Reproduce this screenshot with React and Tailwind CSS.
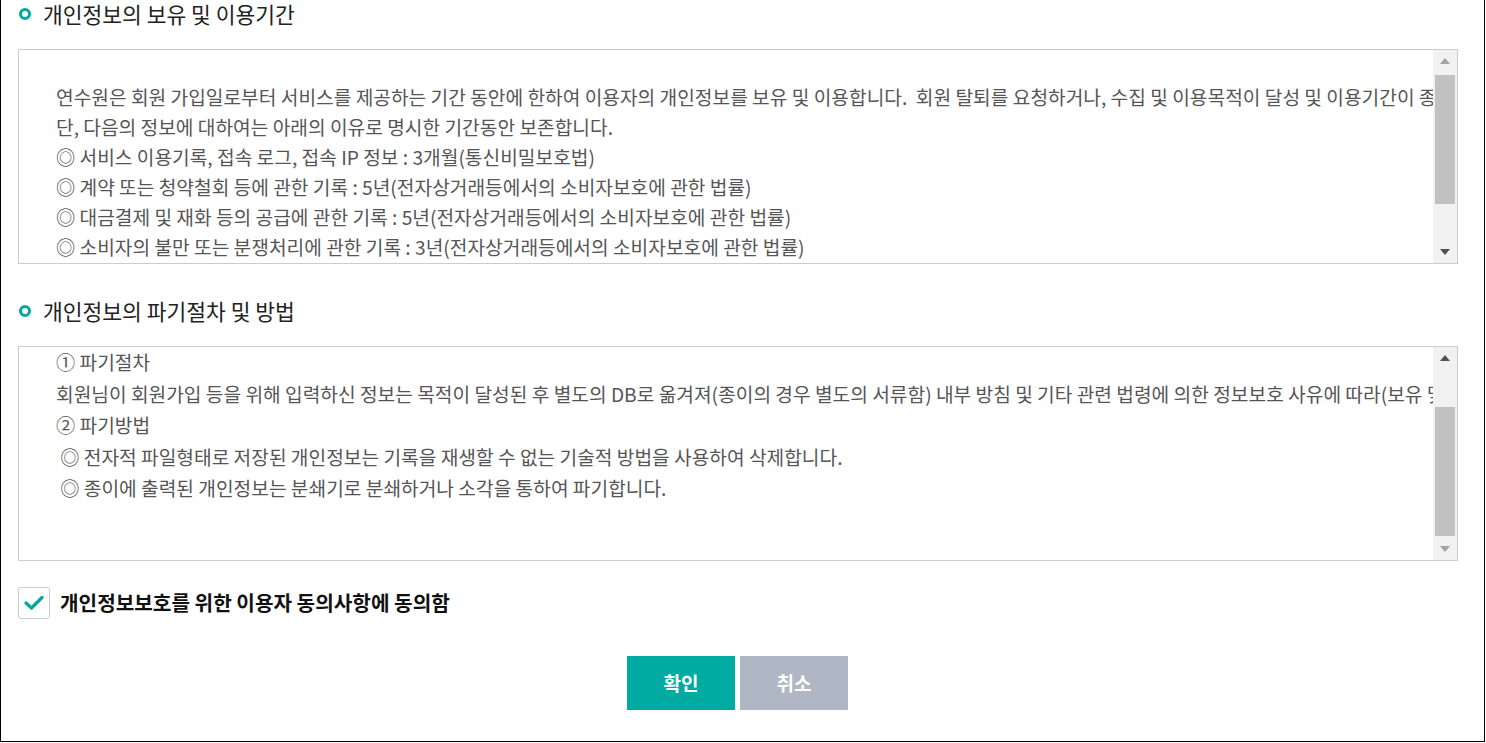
import { useState } from 'react'

const FONT = "font-['Noto_Sans_CJK_KR','Noto_Sans',sans-serif]"

const retention = [
  '',
  '연수원은 회원 가입일로부터 서비스를 제공하는 기간 동안에 한하여 이용자의 개인정보를 보유 및 이용합니다.  회원 탈퇴를 요청하거나, 수집 및 이용목적이 달성 및 이용기간이 종료한 경우 해당 개인정보를 지체 없이 파기합니다.',
  '단, 다음의 정보에 대하여는 아래의 이유로 명시한 기간동안 보존합니다.',
  '◎ 서비스 이용기록, 접속 로그, 접속 IP 정보 : 3개월(통신비밀보호법)',
  '◎ 계약 또는 청약철회 등에 관한 기록 : 5년(전자상거래등에서의 소비자보호에 관한 법률)',
  '◎ 대금결제 및 재화 등의 공급에 관한 기록 : 5년(전자상거래등에서의 소비자보호에 관한 법률)',
  '◎ 소비자의 불만 또는 분쟁처리에 관한 기록 : 3년(전자상거래등에서의 소비자보호에 관한 법률)',
]

const destroy = [
  '① 파기절차',
  '회원님이 회원가입 등을 위해 입력하신 정보는 목적이 달성된 후 별도의 DB로 옮겨져(종이의 경우 별도의 서류함) 내부 방침 및 기타 관련 법령에 의한 정보보호 사유에 따라(보유 및 이용기간 참조) 일정 기간 저장된 후 파기됩니다.',
  '② 파기방법',
  ' ◎ 전자적 파일형태로 저장된 개인정보는 기록을 재생할 수 없는 기술적 방법을 사용하여 삭제합니다.',
  ' ◎ 종이에 출력된 개인정보는 분쇄기로 분쇄하거나 소각을 통하여 파기합니다.',
]

const Arrow = ({ up, active }) => (
  <div className="h-[22px] flex items-center justify-center">
    <svg width="10" height="6" viewBox="0 0 10 6">
      <polygon
        points={up ? '5,0 10,6 0,6' : '0,0 10,0 5,6'}
        fill={active ? '#505050' : '#a3a3a3'}
      />
    </svg>
  </div>
)

const Section = ({ title, lines, atTop, leading, className }) => (
  <div className={className}>
    <h3 className="flex items-center h-[28px] text-[21.5px] text-[#222]">
      <span className="w-[12px] h-[12px] rounded-full border-[3.5px] border-[#00a99e] ml-[1px] mr-[12px]" />
      {title}
    </h3>
    <div className="mt-[21px] w-[1440px] h-[215px] border border-[#cccccc] flex bg-white">
      <div className={`flex-1 overflow-hidden pl-[37px] text-[19.2px] text-[#555] whitespace-pre ${leading}`}>
        {lines.map((l, i) => (
          <div key={i}>{l || '\u00a0'}</div>
        ))}
      </div>
      <div className="w-[24px] bg-[#f1f1f1] flex flex-col">
        <Arrow up active={!atTop} />
        <div className={`flex-1 flex flex-col px-[2px] ${atTop ? 'justify-start pt-[3px]' : 'justify-end pb-[2px]'}`}>
          <div className="h-[129px] bg-[#c1c1c1]" />
        </div>
        <Arrow active={atTop} />
      </div>
    </div>
  </div>
)

export default function App() {
  const [agree, setAgree] = useState(true)

  return (
    <div className={`w-[1485px] h-[742px] border-l border-r border-b border-black bg-white overflow-hidden pl-[17px] ${FONT}`}>
      <Section title="개인정보의 보유 및 이용기간" lines={retention} atTop leading="leading-[30px] pt-[2px]" />
      <Section title="개인정보의 파기절차 및 방법" lines={destroy} leading="leading-[31.5px]" className="mt-[33px]" />

      <label className="mt-[26px] flex items-center cursor-pointer">
        <button
          onClick={() => setAgree(!agree)}
          className="w-[32px] h-[32px] rounded-[3px] border border-[#cccccc] bg-white flex items-center justify-center"
        >
          {agree && (
            <svg width="20" height="16" viewBox="0 0 20 16">
              <path d="M2 8 L7.5 13 L18 2.5" fill="none" stroke="#00a99e" strokeWidth="3.2" strokeLinecap="round" strokeLinejoin="round" />
            </svg>
          )}
        </button>
        <span className="ml-[10px] text-[20.2px] leading-[32px] font-bold text-[#111]">개인정보보호를 위한 이용자 동의사항에 동의함</span>
      </label>

      <div className="mt-[37px] flex justify-center gap-[5px] pr-[27px]">
        <button className="w-[108px] h-[54px] bg-[#00aba1] text-white text-[19px] font-bold">확인</button>
        <button className="w-[108px] h-[54px] bg-[#aeb7c3] text-white text-[19px] font-bold">취소</button>
      </div>
    </div>
  )
}
